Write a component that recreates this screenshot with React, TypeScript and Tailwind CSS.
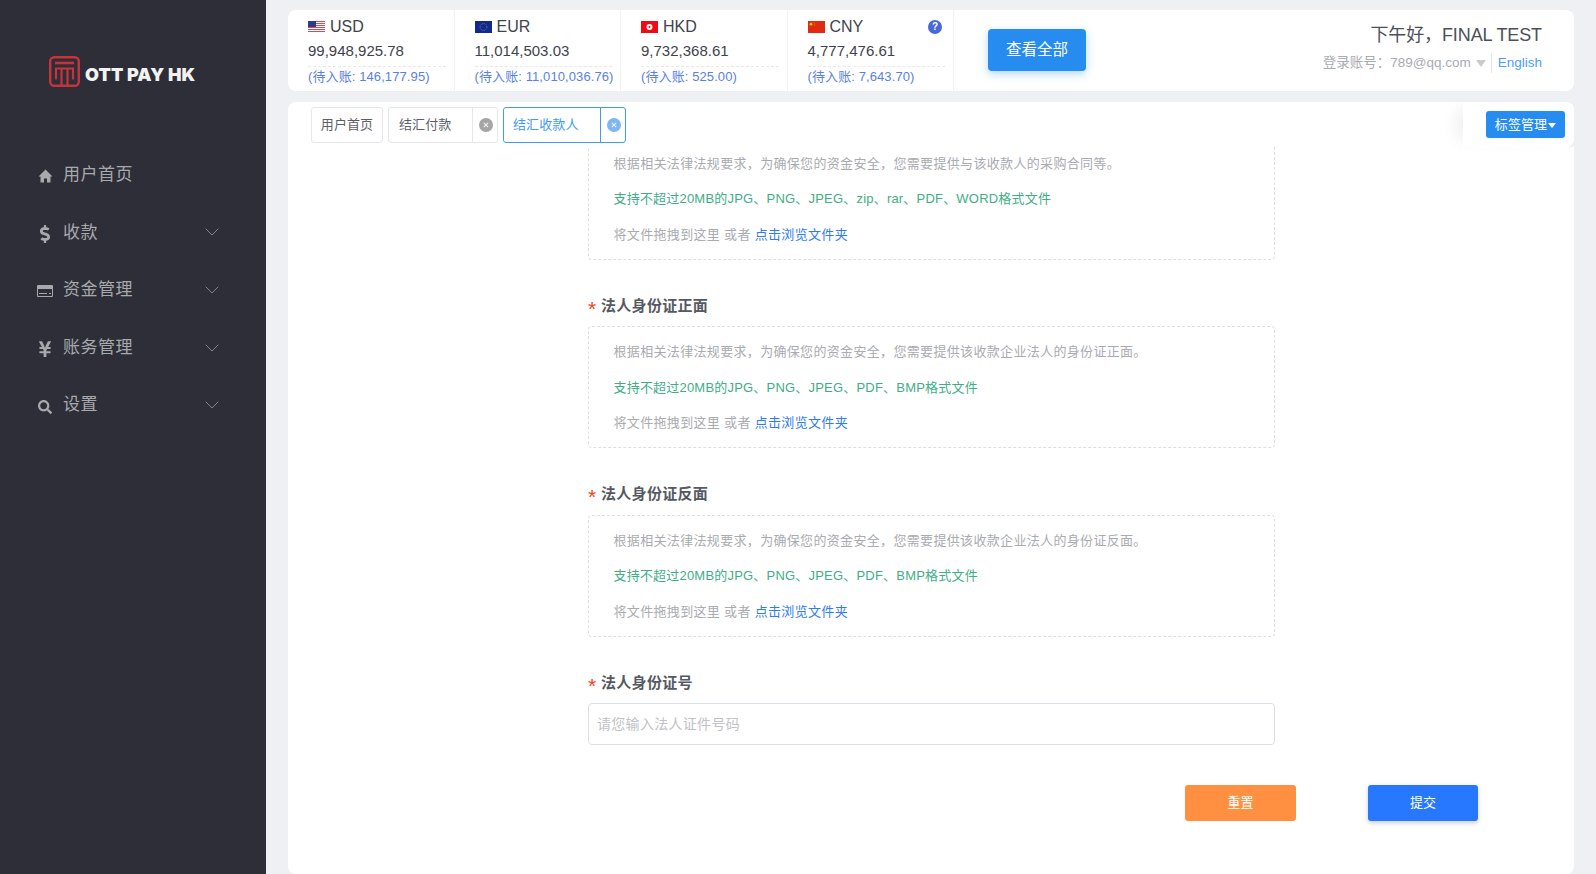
import { ChevronDown } from "lucide-react";
import { FaDollarSign, FaYenSign, FaSearch } from "react-icons/fa";

const FlagUS = () => (
  <svg width="17" height="12" viewBox="0 0 17 12" className="shrink-0">
    <rect width="17" height="12" fill="#fff" />
    {[0, 2, 4, 6, 8, 10].map((y) => (
      <rect key={y} y={y} width="17" height="1" fill="#e8444a" />
    ))}
    <rect width="8" height="6" fill="#2a3a8c" />
  </svg>
);

const FlagEU = () => (
  <svg width="17" height="12" viewBox="0 0 17 12" className="shrink-0">
    <rect width="17" height="12" fill="#12298f" />
    <circle cx="8.5" cy="6" r="3.4" fill="none" stroke="#8a8a50" strokeWidth="0.8" strokeDasharray="1 0.8" />
  </svg>
);

const FlagHK = () => (
  <svg width="17" height="12" viewBox="0 0 17 12" className="shrink-0">
    <rect width="17" height="12" fill="#f00a14" />
    <circle cx="8.5" cy="6" r="3" fill="#fff" />
    <circle cx="8.5" cy="6" r="1" fill="#f00a14" />
  </svg>
);

const FlagCN = () => (
  <svg width="17" height="12" viewBox="0 0 17 12" className="shrink-0">
    <rect width="17" height="12" fill="#e02a12" />
    <circle cx="3" cy="3.2" r="1.4" fill="#f5c518" />
    <circle cx="6" cy="1.6" r="0.4" fill="#f5c518" />
    <circle cx="6.8" cy="3" r="0.4" fill="#f5c518" />
    <circle cx="6.6" cy="4.4" r="0.4" fill="#f5c518" />
  </svg>
);

const HomeIcon = () => (
  <svg width="15" height="14" viewBox="0 0 15 14" fill="currentColor">
    <path d="M7.5 0.5L0.5 7.5H2.5V13.5H6V9.5H9V13.5H12.5V7.5H14.5Z" />
  </svg>
);

const CardIcon = () => (
  <svg width="16" height="12" viewBox="0 0 16 12">
    <rect width="16" height="12" rx="1" fill="currentColor" />
    <rect x="1" y="4" width="14" height="7" fill="#2d2e38" />
    <rect x="2" y="8" width="8" height="1" fill="currentColor" />
    <rect x="12" y="8" width="2" height="1" fill="currentColor" />
  </svg>
);

const balances = [
  { code: "USD", flag: <FlagUS />, amount: "99,948,925.78", pending: "(待入账: 146,177.95)" },
  { code: "EUR", flag: <FlagEU />, amount: "11,014,503.03", pending: "(待入账: 11,010,036.76)" },
  { code: "HKD", flag: <FlagHK />, amount: "9,732,368.61", pending: "(待入账: 525.00)" },
  { code: "CNY", flag: <FlagCN />, amount: "4,777,476.61", pending: "(待入账: 7,643.70)" },
];

const menu = [
  { label: "用户首页", icon: <HomeIcon />, arrow: false },
  { label: "收款", icon: <FaDollarSign size={18} />, arrow: true },
  { label: "资金管理", icon: <CardIcon />, arrow: true },
  { label: "账务管理", icon: <FaYenSign size={18} />, arrow: true },
  { label: "设置", icon: <FaSearch size={14} />, arrow: true },
];

const CloseDot = ({ color }: { color: string }) => (
  <svg width="14" height="14" viewBox="0 0 14 14" className="ml-[2px]">
    <circle cx="7" cy="7" r="7" fill={color} />
    <path d="M4.8 4.8l4.4 4.4M9.2 4.8l-4.4 4.4" stroke="#fff" strokeWidth="1.1" opacity="0.85" />
  </svg>
);

function UploadBox({ hint, formats }: { hint: string; formats: string }) {
  return (
    <div className="w-[687px] h-[122px] shrink-0 border border-dashed border-[#dcdfe6] rounded-[4px] pl-[24.5px] pt-[15px] text-[13px] leading-[20px]">
      <p className="text-[#a9abb0] tracking-[0.33px]">{hint}</p>
      <p className="mt-[15.5px] text-[#3fae86] tracking-[0.2px]">{formats}</p>
      <p className="mt-[15.5px] text-[#a9abb0] tracking-[0.33px]">
        将文件拖拽到这里 或者 <span className="text-[#2f7bf0]">点击浏览文件夹</span>
      </p>
    </div>
  );
}

function FieldLabel({ text }: { text: string }) {
  return (
    <div className="flex items-center h-[22px] mb-[9px] text-[15px] tracking-[0.3px] font-bold text-[#555962]">
      <span className="text-[#f2431e] w-[13px] text-[21px] font-normal leading-[22px] pt-[5px]">*</span>
      {text}
    </div>
  );
}

export default function App() {
  return (
    <div
      className="flex h-[874px] w-full overflow-hidden bg-[#eef0f4]"
      style={{ fontFamily: '"Liberation Sans", "Noto Sans CJK SC", sans-serif' }}
    >
      {/* sidebar */}
      <aside className="w-[266px] shrink-0 bg-[#2d2e38] text-[#a8a9ad]">
        <div className="flex items-start pl-[49px] pt-[56px] gap-[5px]">
          <svg width="31" height="31" viewBox="0 0 31 31" className="shrink-0">
            <rect x="1.2" y="1.2" width="28.6" height="28.6" rx="4" fill="none" stroke="#c5343a" strokeWidth="2.4" />
            <path d="M6 7h19" stroke="#c5343a" strokeWidth="2.6" />
            <path d="M6 12.5h19M7 12.5v11M24 12.5v11M12.5 12.5v17M18.5 12.5v17" fill="none" stroke="#c5343a" strokeWidth="2.2" />
          </svg>
          <span className="mt-[7px] text-[18px] leading-[24px] font-black tracking-[0.1px] text-[#f2f2f2] whitespace-nowrap" style={{ fontFamily: "Inter, sans-serif" }}>
            OTT PAY HK
          </span>
        </div>
        <nav className="mt-[59px]">
          {menu.map((m) => (
            <div key={m.label} className="flex items-center h-[57.6px] pl-[36px] pr-[42px]">
              <span className="w-[18px] flex justify-center mr-[9px] mt-[3px]">{m.icon}</span>
              <span className="text-[17px] tracking-[0.5px] flex-1">{m.label}</span>
              {m.arrow && <ChevronDown size={24} strokeWidth={0.7} />}
            </div>
          ))}
        </nav>
      </aside>

      <main className="flex-1 min-w-0 flex flex-col px-[22px] pt-[10px]">
        {/* balance bar */}
        <div className="h-[81px] shrink-0 bg-white rounded-[8px] flex items-stretch text-[#40434c]">
          {balances.map((b, i) => (
            <div key={b.code} className="relative w-[166.5px] shrink-0 border-r border-[#f0f1f3] pl-[20px] pr-[8px] pt-[8px]">
              <div className="flex items-center gap-[5px] h-[18px] text-[16px]">
                {b.flag}
                {b.code}
              </div>
              <div className="mt-[5px] h-[20px] text-[15px] leading-[20px]">{b.amount}</div>
              <div className="mt-[5px] border-t border-dashed border-[#e8e9ec] text-[13px] tracking-[0.1px] leading-[20px] whitespace-nowrap text-[#5a7fe6]">
                {b.pending}
              </div>
              {i === 3 && (
                <span className="absolute right-[11px] top-[10px] w-[14px] h-[14px] rounded-full bg-[#4a68d8] text-white text-[10px] font-bold leading-[14px] text-center">
                  ?
                </span>
              )}
            </div>
          ))}
          <div className="pl-[34px] pt-[19px]">
            <button className="w-[98px] h-[42px] rounded-[4px] bg-[#268cf0] text-white text-[15.5px] shadow-[0_3px_8px_rgba(38,140,240,0.35)]">
              查看全部
            </button>
          </div>
          <div className="flex-1 flex flex-col items-end pr-[32px] pt-[13px]">
            <div className="text-[18px] leading-[24px] tracking-[-0.1px] text-[#4b4f5a]">下午好，FINAL TEST</div>
            <div className="mt-[6px] flex items-center h-[20px] text-[13.5px] text-[#a9abb0]">
              登录账号：789@qq.com
              <span className="ml-[5px] mr-[5px] w-0 h-0 border-x-[5.5px] border-x-transparent border-t-[7px] border-t-[#c8cacf]" />
              <span className="border-l border-[#e3e4e8] pl-[6px] text-[#4a9eff]">English</span>
            </div>
          </div>
        </div>

        {/* tab bar */}
        <div className="mt-[11px] h-[45px] shrink-0 bg-white rounded-t-[8px] rounded-br-[8px] flex items-center pl-[23px] relative z-10 text-[13px] tracking-[0.1px] text-[#5c5f68]">
          <div className="h-[36px] w-[72px] flex items-center justify-center border border-[#e6e7ea] rounded-[3px]">用户首页</div>
          <div className="ml-[5px] h-[36px] w-[110px] flex border border-[#e6e7ea] rounded-[3px]">
            <span className="flex-1 flex items-center pl-[10px]">结汇付款</span>
            <span className="w-[25px] border-l border-[#e6e7ea] flex items-center justify-center">
              <CloseDot color="#a5a5a5" />
            </span>
          </div>
          <div className="ml-[5px] h-[36px] w-[123px] flex border border-[#3f9bf5] rounded-[3px] text-[#3f9bf5]">
            <span className="flex-1 flex items-center pl-[9px]">结汇收款人</span>
            <span className="w-[25px] border-l border-[#3f9bf5] flex items-center justify-center">
              <CloseDot color="#7fb6f5" />
            </span>
          </div>
          <div className="absolute right-0 top-0 h-full w-[111px] bg-white rounded-br-[8px] rounded-tr-[8px] flex items-center pl-[23px] shadow-[-14px_0_14px_-6px_rgba(0,0,0,0.05)]">
            <button className="w-[79px] h-[27px] rounded-[3px] bg-[#268cf0] text-white text-[13px] flex items-center justify-center whitespace-nowrap">
              标签管理
              <span className="ml-[1px] mt-[2px] w-0 h-0 border-x-[4px] border-x-transparent border-t-[5px] border-t-white" />
            </button>
          </div>
        </div>

        {/* form */}
        <div className="flex-1 min-h-0 overflow-hidden bg-white rounded-b-[8px]">
          <div className="pl-[300px] -mt-[9.5px]">
            <UploadBox
              hint="根据相关法律法规要求，为确保您的资金安全，您需要提供与该收款人的采购合同等。"
              formats="支持不超过20MB的JPG、PNG、JPEG、zip、rar、PDF、WORD格式文件"
            />
            <div className="mt-[35.5px]">
              <FieldLabel text="法人身份证正面" />
              <UploadBox
                hint="根据相关法律法规要求，为确保您的资金安全，您需要提供该收款企业法人的身份证正面。"
                formats="支持不超过20MB的JPG、PNG、JPEG、PDF、BMP格式文件"
              />
            </div>
            <div className="mt-[35.5px]">
              <FieldLabel text="法人身份证反面" />
              <UploadBox
                hint="根据相关法律法规要求，为确保您的资金安全，您需要提供该收款企业法人的身份证反面。"
                formats="支持不超过20MB的JPG、PNG、JPEG、PDF、BMP格式文件"
              />
            </div>
            <div className="mt-[35.5px]">
              <FieldLabel text="法人身份证号" />
              <input
                placeholder="请您输入法人证件号码"
                className="w-[687px] h-[42px] border border-[#dcdfe6] rounded-[4px] px-[8px] text-[14px] tracking-[0.3px] outline-none placeholder:text-[#c0c2c7]"
              />
            </div>
            <div className="mt-[40px] pl-[597px] flex gap-[72px]">
              <button className="w-[111px] h-[36px] rounded-[3px] bg-[#ff9042] text-white text-[13px]">重置</button>
              <button className="w-[110px] h-[36px] rounded-[3px] bg-[#2878ff] text-white text-[13px] shadow-[0_2px_5px_rgba(0,0,0,0.2)]">提交</button>
            </div>
          </div>
        </div>
      </main>
    </div>
  );
}
